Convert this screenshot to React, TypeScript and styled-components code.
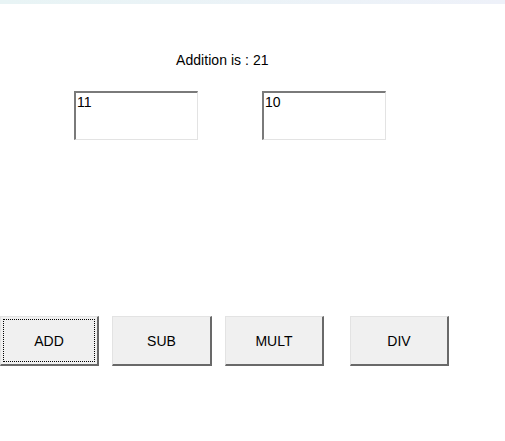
import styled, { createGlobalStyle } from 'styled-components';

const GlobalStyle = createGlobalStyle`
  html, body {
    margin: 0;
    padding: 0;
    background: #ffffff;
  }
  body {
    font-family: 'Liberation Sans', Arial, sans-serif;
    font-size: 14px;
    color: #000000;
  }
`;

const Page = styled.div`
  width: 505px;
  height: 441px;
  display: flex;
  flex-direction: column;
  overflow: hidden;
`;

const TopStrip = styled.div`
  height: 4px;
  background: linear-gradient(90deg, #e8f4f5 0%, #eef1f9 100%);
`;

const ResultLine = styled.div`
  margin-top: 48px;
  padding-left: 176px;
  line-height: 16px;
  font-size: 14px;
  letter-spacing: 0.05px;
`;

const InputRow = styled.div`
  margin-top: 23px;
  padding-left: 74px;
  display: flex;
  gap: 64px;
`;

const NumberBox = styled.textarea`
  box-sizing: border-box;
  width: 124px;
  height: 49px;
  margin: 0;
  padding: 1px 1px;
  resize: none;
  overflow: hidden;
  font-family: 'Liberation Sans', Arial, sans-serif;
  font-size: 14px;
  line-height: 16px;
  color: #000000;
  background: #ffffff;
  border-style: solid;
  border-color: #7a7a7a #e3e3e3 #e3e3e3 #7a7a7a;
  border-width: 2px 1px 1px 2px;
  outline: none;
`;

const ButtonRow = styled.div`
  margin-top: 176px;
  display: flex;
`;

const OpButton = styled.button<{ $width: number; $gap: number; $focused?: boolean }>`
  position: relative;
  box-sizing: border-box;
  width: ${(p) => p.$width}px;
  height: 50px;
  margin: 0 ${(p) => p.$gap}px 0 0;
  padding: 0;
  font-family: 'Liberation Sans', Arial, sans-serif;
  font-size: 14px;
  color: #000000;
  background: #f0f0f0;
  border-style: solid;
  border-color: #e3e3e3 #696969 #696969 #e3e3e3;
  border-width: 1px 2px 2px 1px;
  cursor: pointer;

  ${(p) =>
    p.$focused &&
    `
    &::after {
      content: '';
      position: absolute;
      inset: 2px 2px 2px 2px;
      border: 1px dotted #000000;
      pointer-events: none;
    }
  `}
`;

export default function App() {
  return (
    <>
      <GlobalStyle />
      <Page>
        <TopStrip />
        <ResultLine>Addition is : 21</ResultLine>
        <InputRow>
          <NumberBox defaultValue="11" />
          <NumberBox defaultValue="10" />
        </InputRow>
        <ButtonRow>
          <OpButton $width={99} $gap={13} $focused>
            ADD
          </OpButton>
          <OpButton $width={100} $gap={13}>SUB</OpButton>
          <OpButton $width={99} $gap={26}>MULT</OpButton>
          <OpButton $width={99} $gap={0}>DIV</OpButton>
        </ButtonRow>
      </Page>
    </>
  );
}
